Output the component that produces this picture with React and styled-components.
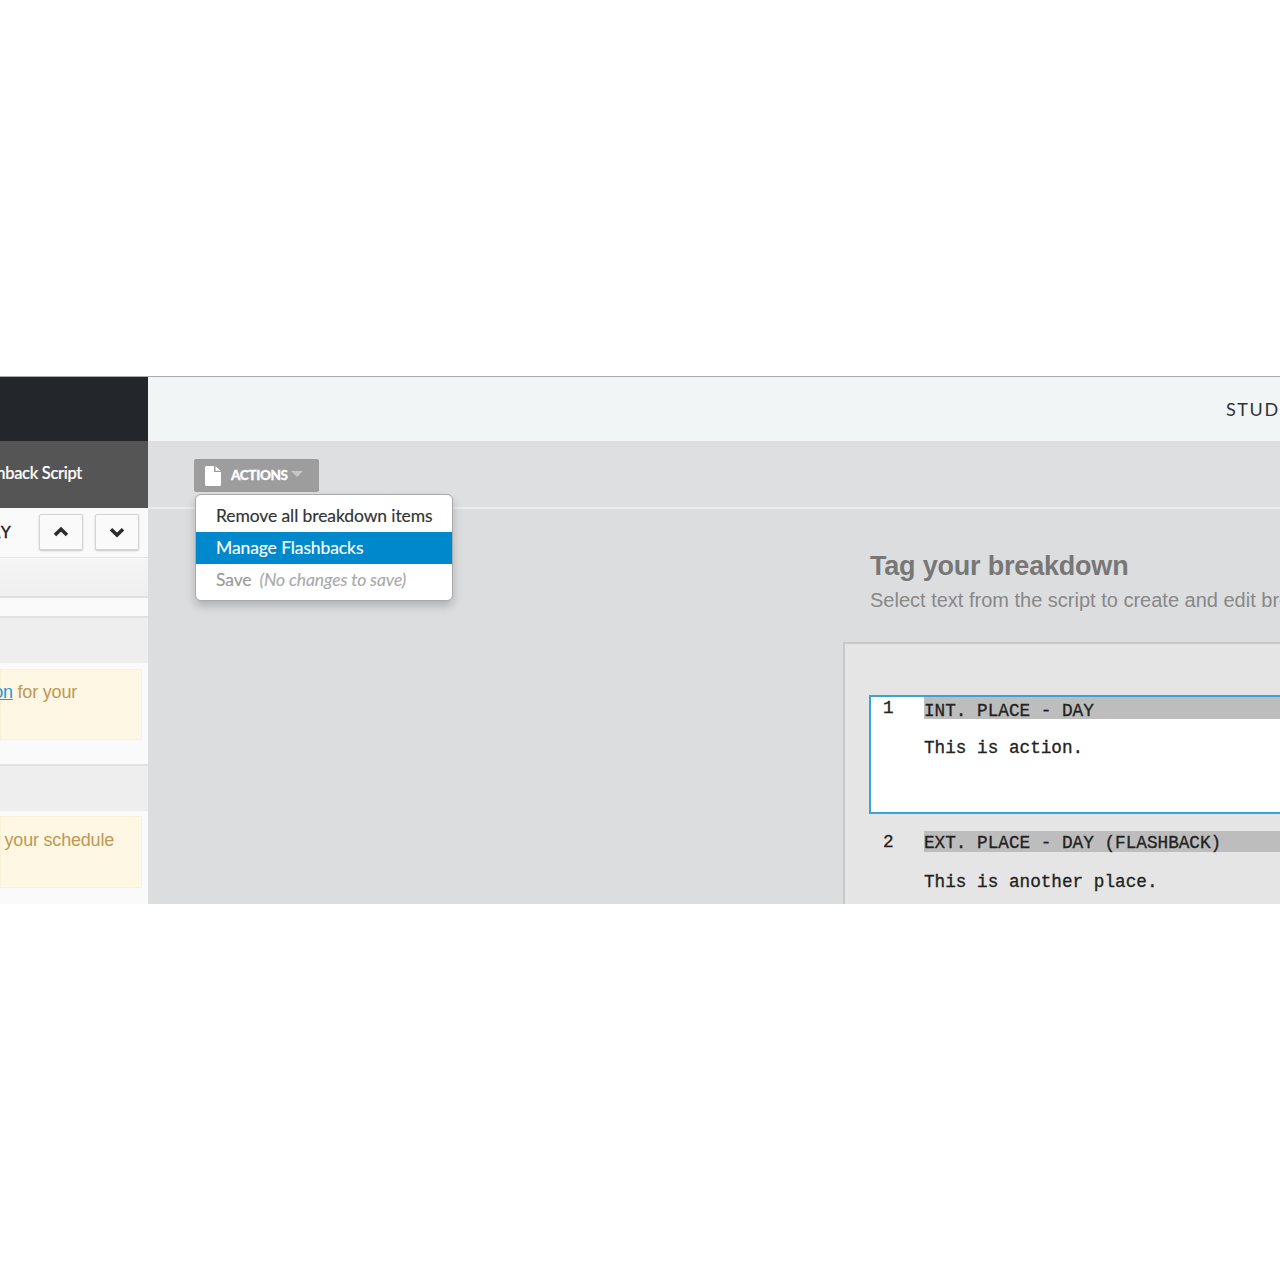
import React from 'react';
import styled, { createGlobalStyle } from 'styled-components';

const Global = createGlobalStyle`
  html, body { margin: 0; padding: 0; background: #fff; }
  * { box-sizing: border-box; }
`;

const Page = styled.div`
  padding-top: 376px;
  height: 1280px;
  overflow: hidden;
  background: #fff;
`;

const Frame = styled.div`
  display: flex;
  height: 528px;
  border-top: 1px solid #a9abac;
  overflow: hidden;
`;

const Sidebar = styled.aside`
  flex: 0 0 148px;
  display: flex;
  flex-direction: column;
  overflow: hidden;
  background: #fafafa;
`;

const Brand = styled.div`
  flex: 0 0 64px;
  background: #23272b;
`;

const SideTitle = styled.div`
  flex: 0 0 67px;
  display: flex;
  align-items: center;
  justify-content: flex-end;
  padding: 0 66px 2px 0;
  background: #555;
  color: #fff;
  font: 500 16.5px/1 Lato, sans-serif;
  letter-spacing: -0.3px;
  -webkit-text-stroke: 0.2px #fff;
  white-space: nowrap;
`;

const SceneNav = styled.div`
  flex: 0 0 50px;
  display: flex;
  align-items: center;
  justify-content: flex-end;
  gap: 12px;
  padding: 0 9px 1px 0;
  background: #fafafa;
  border-bottom: 1px solid #e4e4e4;
  white-space: nowrap;
`;

const SceneName = styled.span`
  margin: 4px 16px 0 0;
  color: #222;
  font: 17.7px/1 'Liberation Mono', monospace;
  -webkit-text-stroke: 0.3px #222;
`;

const ArrowButton = styled.button`
  flex: 0 0 44px;
  height: 36px;
  display: flex;
  align-items: center;
  justify-content: center;
  padding: 0;
  background: #fafafa;
  border: 1px solid #d4d4d4;
  border-radius: 2px;
  box-shadow: 0 1px 2px rgba(0, 0, 0, 0.22);
`;

const FilterRow = styled.div`
  flex: 0 0 39px;
  margin-top: 1px;
  background: linear-gradient(#f5f5f5, #efefef);
  border-bottom: 2px solid #dfdfdf;
`;

const Spacer = styled.div`
  flex: 0 0 18px;
  background: #fafafa;
`;

const SectionHead = styled.div`
  flex: 0 0 47px;
  background: #eee;
  border-top: 2px solid #e2e2e2;
`;

const SectionBody = styled.div`
  flex: 0 0 ${p => p.$h}px;
  padding: ${p => p.$top}px 6px 0 0;
  background: #fafafa;
`;

const Notice = styled.div`
  height: ${p => p.$h}px;
  display: flex;
  justify-content: flex-end;
  padding: ${p => p.$textTop}px ${p => p.$right}px 0 0;
  background: #fdf7e4;
  border: 1px solid #fbf1d8;
  color: #c09853;
  font: 18px/24px 'Liberation Sans', sans-serif;
  letter-spacing: -0.2px;
  white-space: pre;
`;

const NoticeLink = styled.a`
  color: #1d9ad9;
  text-decoration: underline;
`;

const Main = styled.main`
  flex: 1;
  min-width: 0;
  position: relative;
  display: flex;
  flex-direction: column;
  overflow: hidden;
  background: #dcdddf;
`;

const TopBar = styled.header`
  flex: 0 0 64px;
  display: flex;
  align-items: center;
  padding: 0 0 0 1078px;
  background: #f1f5f6;
  color: #333;
  font: 18px/1 Lato, sans-serif;
  letter-spacing: 1.6px;
  white-space: nowrap;
`;

const Toolbar = styled.div`
  flex: 0 0 68px;
  padding: 18px 0 0 46px;
  background: #dddfe0;
  border-bottom: 2px solid #eaecec;
`;

const ActionsButton = styled.button`
  width: 125px;
  height: 33px;
  display: flex;
  align-items: center;
  padding: 0 0 0 11px;
  background: #9d9d9d;
  border: 0;
  border-radius: 2px;
  color: #fff;
  font: 900 13.5px/1 Lato, sans-serif;
  letter-spacing: -0.35px;
  -webkit-text-stroke: 0.3px #fff;
  text-transform: uppercase;
`;

const ActionsLabel = styled.span`
  margin-left: 10px;
`;

const Caret = styled.span`
  width: 0;
  height: 0;
  margin: -3px 0 0 3px;
  border-left: 6px solid transparent;
  border-right: 6px solid transparent;
  border-top: 6px solid #c6c6c6;
`;

const Menu = styled.ul`
  position: absolute;
  left: 47px;
  top: 117px;
  width: 258px;
  height: 107px;
  margin: 0;
  padding: 5px 0 0;
  list-style: none;
  background: #fff;
  border: 1px solid #a8a8a8;
  border-radius: 6px;
  box-shadow: 0 5px 10px rgba(0, 0, 0, 0.2);
  z-index: 2;
`;

const MenuItem = styled.li`
  height: 32px;
  padding: 0 20px;
  background: ${p => (p.$active ? '#0088cc' : 'transparent')};
  color: ${p => (p.$active ? '#fff' : p.$disabled ? '#999' : '#333')};
  font: 17.5px/31px Lato, sans-serif;
  letter-spacing: -0.1px;
  -webkit-text-stroke: 0.15px currentColor;
  white-space: nowrap;
`;

const MenuNote = styled.em`
  margin-left: 8px;
  color: #aaa;
`;

const Content = styled.div`
  flex: 1;
  min-height: 0;
  display: flex;
  flex-direction: column;
  padding: 40px 0 0 695px;
`;

const Heading = styled.h2`
  margin: 0 0 0 27px;
  color: #777;
  font: bold 27px/34px 'Liberation Sans', sans-serif;
  letter-spacing: -0.2px;
  white-space: nowrap;
`;

const SubHeading = styled.p`
  margin: 4px 0 0 27px;
  color: #888;
  font: 20px/26px 'Liberation Sans', sans-serif;
  white-space: nowrap;
`;

const ScriptPanel = styled.section`
  flex: 1;
  margin-top: 29px;
  padding: 51px 0 0 24px;
  background: #e5e5e5;
  border: solid #c8c8c8;
  border-width: 2px 0 0 2px;
`;

const Scene = styled.div`
  display: flex;
  height: ${p => p.$h}px;
  margin-bottom: 15px;
  background: ${p => (p.$selected ? '#fff' : 'transparent')};
  border: 2px solid ${p => (p.$selected ? '#38a3dc' : 'transparent')};
  border-right: 0;
`;

const LineNumber = styled.div`
  flex: 0 0 53px;
  padding: 3px 0 0 12px;
  color: #222;
  font: 17.7px/1 'Liberation Mono', monospace;
  -webkit-text-stroke: 0.3px #222;
`;

const SceneBody = styled.div`
  flex: 1;
  color: #222;
  font: 17.7px/1 'Liberation Mono', monospace;
  -webkit-text-stroke: 0.3px #222;
  white-space: pre;
`;

const Slugline = styled.div`
  height: ${p => p.$h}px;
  line-height: ${p => p.$line}px;
  background: #bdbdbd;
`;

const Action = styled.div`
  margin-top: ${p => p.$gap}px;
  line-height: 20px;
`;

const FileIcon = () => (
  <svg width="16" height="20" viewBox="0 0 16 20" fill="#fff">
    <path d="M1.5 0H9v6h7v12.5a1.5 1.5 0 0 1-1.5 1.5h-13A1.5 1.5 0 0 1 0 18.5v-17A1.5 1.5 0 0 1 1.5 0z" />
    <path d="M10.5 0.3 15.7 4.7H10.5z" />
  </svg>
);

const Chevron = ({ down }) => (
  <svg width="16" height="12" viewBox="0 0 16 12" fill="none" stroke="#2c2c2c" strokeWidth="3.6">
    <path d={down ? 'M2 3.2 8 9l6-5.8' : 'M2 9 8 3.2 14 9'} />
  </svg>
);

export default function App() {
  return (
    <Page>
      <Global />
      <Frame>
        <Sidebar>
          <Brand />
          <SideTitle>Flashback Script</SideTitle>
          <SceneNav>
            <SceneName>INT. PLACE - DAY</SceneName>
            <ArrowButton><Chevron /></ArrowButton>
            <ArrowButton><Chevron down /></ArrowButton>
          </SceneNav>
          <FilterRow />
          <Spacer />
          <SectionHead />
          <SectionBody $h={101} $top={6}>
            <Notice $h={71} $right={64} $textTop={10}>
              <span>Add a <NoticeLink>location</NoticeLink> for your</span>
            </Notice>
          </SectionBody>
          <SectionHead />
          <SectionBody $h={93} $top={5}>
            <Notice $h={72} $right={27} $textTop={11}>
              <span>Add scenes for your schedule</span>
            </Notice>
          </SectionBody>
        </Sidebar>
        <Main>
          <TopBar>STUDIO</TopBar>
          <Toolbar>
            <ActionsButton>
              <FileIcon />
              <ActionsLabel>Actions</ActionsLabel>
              <Caret />
            </ActionsButton>
          </Toolbar>
          <Menu>
            <MenuItem>Remove all breakdown items</MenuItem>
            <MenuItem $active>Manage Flashbacks</MenuItem>
            <MenuItem $disabled>Save<MenuNote>(No changes to save)</MenuNote></MenuItem>
          </Menu>
          <Content>
            <Heading>Tag your breakdown</Heading>
            <SubHeading>Select text from the script to create and edit breakdown items</SubHeading>
            <ScriptPanel>
              <Scene $selected $h={119}>
                <LineNumber>1</LineNumber>
                <SceneBody>
                  <Slugline $h={22} $line={28}>INT. PLACE - DAY</Slugline>
                  <Action $gap={19}>This is action.</Action>
                </SceneBody>
              </Scene>
              <Scene $h={100}>
                <LineNumber>2</LineNumber>
                <SceneBody>
                  <Slugline $h={21} $line={24}>EXT. PLACE - DAY (FLASHBACK)</Slugline>
                  <Action $gap={20}>This is another place.</Action>
                </SceneBody>
              </Scene>
            </ScriptPanel>
          </Content>
        </Main>
      </Frame>
    </Page>
  );
}
